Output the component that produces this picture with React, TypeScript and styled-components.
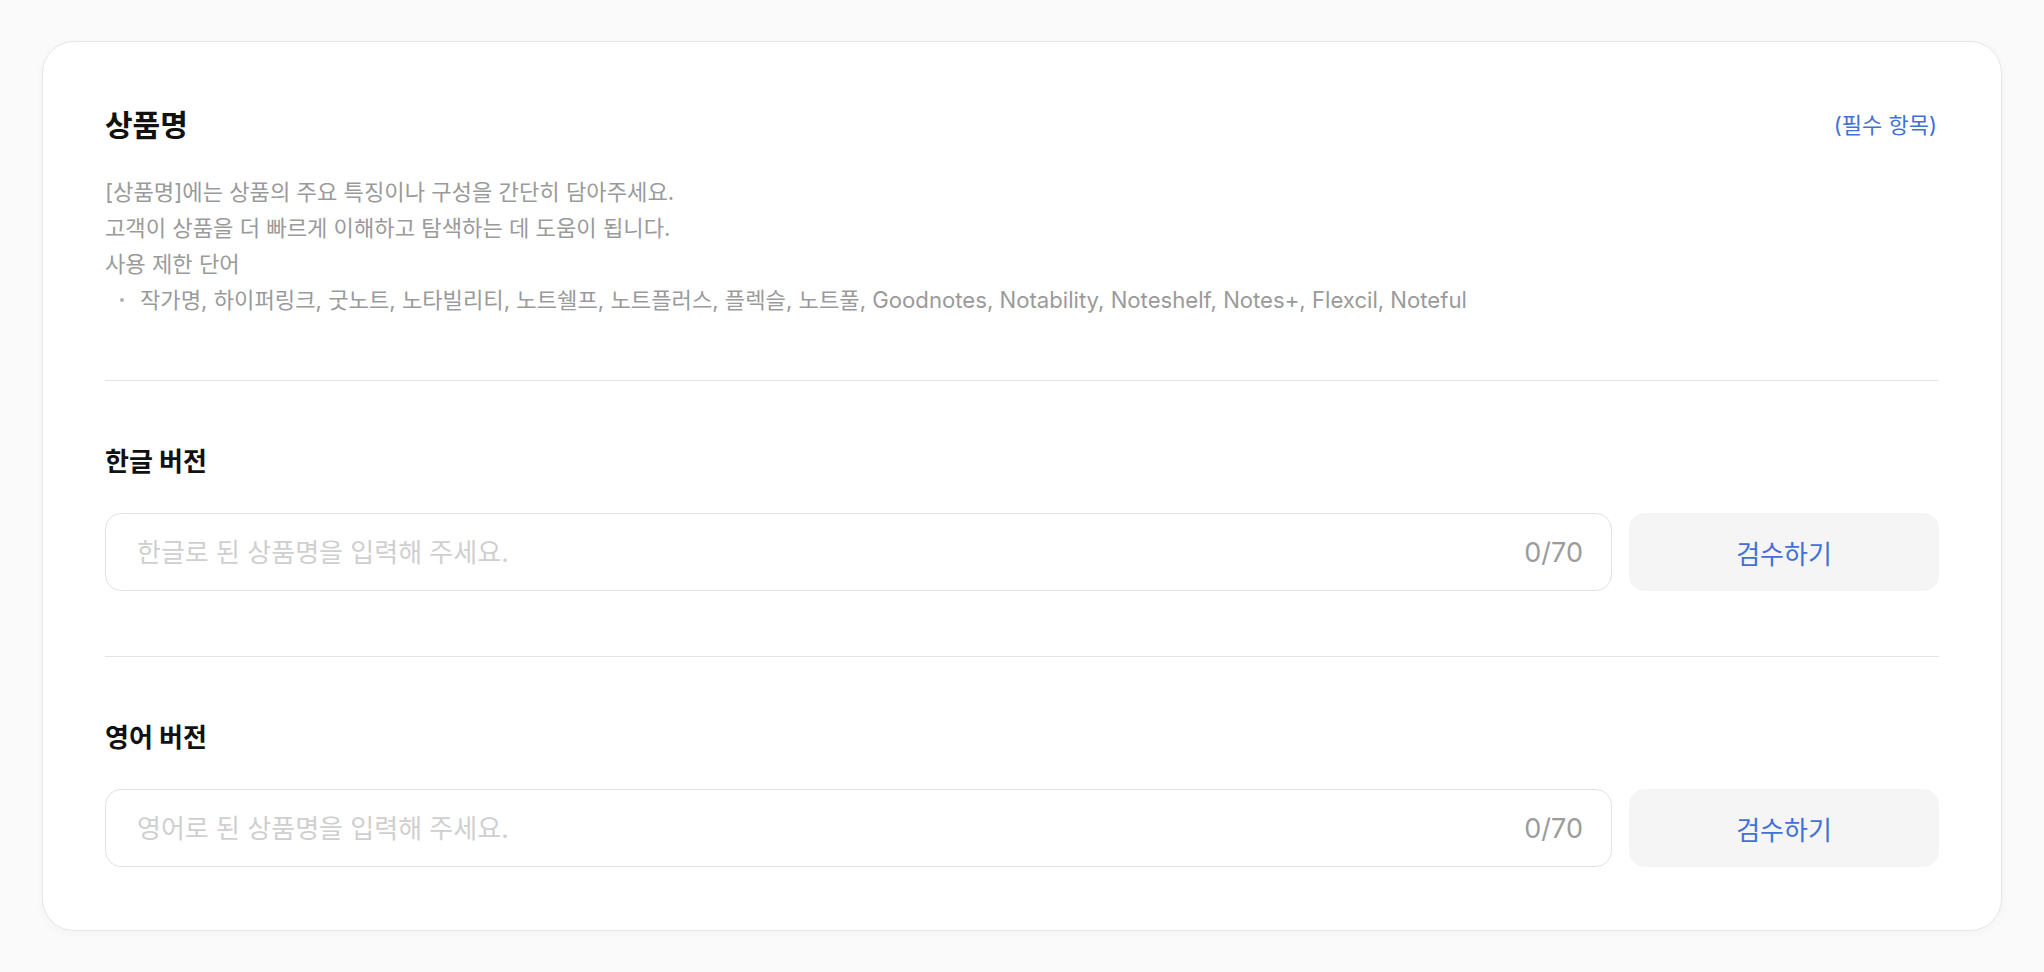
import React from 'react'
import styled, { createGlobalStyle } from 'styled-components'

const GlobalStyle = createGlobalStyle`
  * { box-sizing: border-box; }
  body {
    margin: 0;
    background: #fafafa;
    font-family: Inter, "Noto Sans CJK KR", sans-serif;
    color: #111;
  }
`

interface Field {
  label: string
  placeholder: string
  max: number
}

const fields: Field[] = [
  { label: '한글 버전', placeholder: '한글로 된 상품명을 입력해 주세요.', max: 70 },
  { label: '영어 버전', placeholder: '영어로 된 상품명을 입력해 주세요.', max: 70 },
]

const bannedWords =
  '작가명, 하이퍼링크, 굿노트, 노타빌리티, 노트쉘프, 노트플러스, 플렉슬, 노트풀, Goodnotes, Notability, Noteshelf, Notes+, Flexcil, Noteful'

const FieldBlock: React.FC<{ field: Field; last?: boolean }> = ({ field, last }) => {
  const [value, setValue] = React.useState('')
  return (
    <Section $last={last}>
      <Label>{field.label}</Label>
      <FieldRow>
        <InputBox>
          <TextInput
            value={value}
            maxLength={field.max}
            placeholder={field.placeholder}
            onChange={(e) => setValue(e.target.value)}
          />
          <Counter>
            {value.length}/{field.max}
          </Counter>
        </InputBox>
        <CheckButton type="button">검수하기</CheckButton>
      </FieldRow>
    </Section>
  )
}

export default function App() {
  return (
    <>
      <GlobalStyle />
      <Page>
        <Card>
          <Header>
            <TitleRow>
              <Title>상품명</Title>
              <Required>(필수 항목)</Required>
            </TitleRow>
            <Description>
              <Line>[상품명]에는 상품의 주요 특징이나 구성을 간단히 담아주세요.</Line>
              <Line>고객이 상품을 더 빠르게 이해하고 탐색하는 데 도움이 됩니다.</Line>
              <Line>사용 제한 단어</Line>
              <BulletList>
                <BulletItem>
                  <Dot />
                  {bannedWords}
                </BulletItem>
              </BulletList>
            </Description>
          </Header>
          {fields.map((f, i) => (
            <FieldBlock key={f.label} field={f} last={i === fields.length - 1} />
          ))}
        </Card>
      </Page>
    </>
  )
}

const Page = styled.div`
  padding: 41px 42px;
`

const Card = styled.div`
  background: #fff;
  border: 1px solid #e6e6e6;
  border-radius: 32px;
  padding: 63px 62px 63px;
  box-shadow: 0 2px 10px rgba(0, 0, 0, 0.03);
`

const Header = styled.div`
  padding-bottom: 62px;
  border-bottom: 1px solid #e4e4e4;
`

const TitleRow = styled.div`
  display: flex;
  justify-content: space-between;
  align-items: center;
  height: 40px;
`

const Title = styled.h2`
  margin: 0;
  font-size: 30px;
  font-weight: 700;
  line-height: 40px;
  color: #111;
`

const Required = styled.span`
  font-size: 22px;
  line-height: 40px;
  color: #4270d6;
  margin-right: 2px;
`

const Description = styled.div`
  margin-top: 29px;
  font-size: 22.15px;
  line-height: 36px;
  color: #9a9a9a;
`

const Line = styled.p`
  margin: 0;
`

const BulletList = styled.ul`
  margin: 0;
  padding: 0;
  list-style: none;
`

const BulletItem = styled.li`
  display: flex;
  align-items: center;
  gap: 16px;
  padding-left: 15px;
`

const Dot = styled.span`
  width: 4px;
  height: 4px;
  border-radius: 50%;
  background: #b0b0b0;
  flex: none;
`

const Section = styled.div<{ $last?: boolean }>`
  padding: 64px 0 ${(p) => (p.$last ? '0' : '65px')};
  border-bottom: ${(p) => (p.$last ? 'none' : '1px solid #e4e4e4')};
`

const Label = styled.h3`
  margin: 0;
  font-size: 26px;
  font-weight: 700;
  line-height: 34px;
  color: #111;
`

const FieldRow = styled.div`
  margin-top: 34px;
  display: flex;
  gap: 17px;
`

const InputBox = styled.label`
  flex: 1;
  height: 78px;
  display: flex;
  align-items: center;
  gap: 16px;
  padding: 0 28px 0 31px;
  border: 1px solid #e3e3e3;
  border-radius: 16px;
  background: #fff;
`

const TextInput = styled.input`
  flex: 1;
  min-width: 0;
  border: none;
  outline: none;
  background: transparent;
  font-family: Inter, "Noto Sans CJK KR", sans-serif;
  font-size: 26px;
  color: #222;
  padding: 0;

  &::placeholder {
    color: #cfcfcf;
  }
`

const Counter = styled.span`
  font-size: 27px;
  color: #9b9b9b;
  flex: none;
`

const CheckButton = styled.button`
  width: 310px;
  height: 78px;
  border: none;
  border-radius: 16px;
  background: #f5f5f6;
  color: #4270d6;
  font-family: Inter, "Noto Sans CJK KR", sans-serif;
  font-size: 26px;
  cursor: pointer;
`
